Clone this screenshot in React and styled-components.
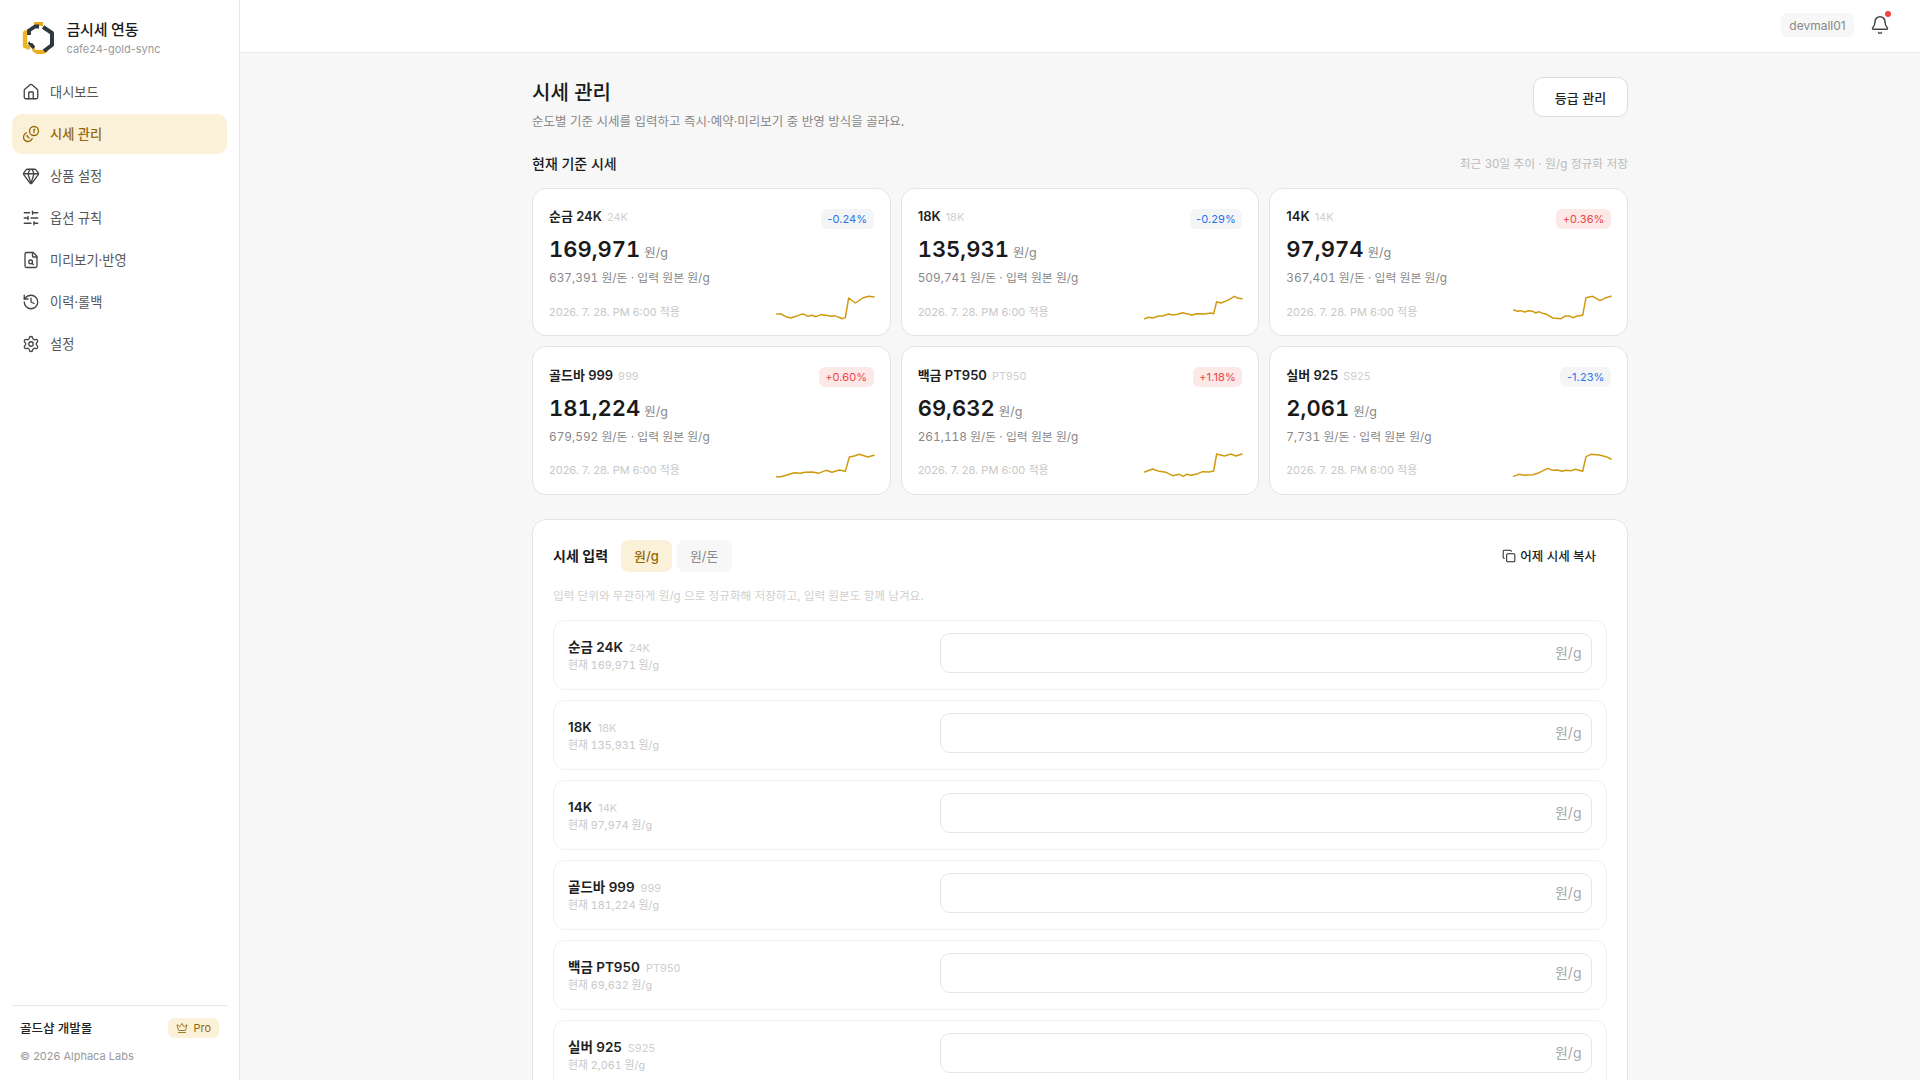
import React from "react";
import styled, { createGlobalStyle } from "styled-components";
import { House, Coins, Gem, SlidersHorizontal, FileSearch, History, Settings, Copy, Crown, Bell } from "lucide-react";

const Global = createGlobalStyle`
  html, body { margin: 0; height: 100%; overflow: hidden; }
  body { background: #f7f7f7; color: #1a1a1a; font-family: Inter, "Noto Sans CJK KR", sans-serif; }
  #root { height: 100%; }
  * { box-sizing: border-box; }
`;

const Shell = styled.div`display: flex; height: 100vh; overflow: hidden;`;
const Sidebar = styled.aside`
  width: 240px; flex: none; display: flex; flex-direction: column; background: #fff;
  border-right: 1px solid #e8e8e8; padding: 0 12px;
`;
const Brand = styled.div`display: flex; align-items: center; gap: 10.5px; height: 72px; padding: 4px 0 0 10px;`;
const BrandText = styled.div`display: flex; flex-direction: column; gap: 2px;`;
const BrandName = styled.div`font-size: 15px; font-weight: 500; line-height: 20px; letter-spacing: -0.2px;`;
const BrandSub = styled.div`font-size: 11px; color: #9a9a9a; line-height: 14px;`;
const Nav = styled.nav`display: flex; flex-direction: column; gap: 2px; flex: 1;`;
const NavItem = styled.div`
  display: flex; align-items: center; gap: 10px; height: 40px; padding: 0 10px; border-radius: 10px;
  font-size: 13.2px; font-weight: ${p => (p.$active ? 500 : 400)};
  color: ${p => (p.$active ? "#94690a" : "#555")};
  background: ${p => (p.$active ? "#fbf1d8" : "transparent")};
  svg { color: ${p => (p.$active ? "#94690a" : "#444")}; flex: none; margin-bottom: 1px; transform: ${p => (p.$active ? "scaleX(-1)" : "none")}; }
`;
const NavLabel = styled.span`padding-bottom: 2px;`;
const SideFoot = styled.div`border-top: 1px solid #e8e8e8; padding: 12px 8px 0; height: 75px;`;
const FootRow = styled.div`display: flex; align-items: center; justify-content: space-between; height: 20px;`;
const FootName = styled.div`font-size: 12.5px; font-weight: 500; color: #222; padding-bottom: 2px;`;
const ProBadge = styled.div`
  display: flex; align-items: center; gap: 5px; height: 20px; padding: 0 8px; border-radius: 6px;
  background: #fbf1d8; color: #94690a; font-size: 11px;
`;
const Copyright = styled.div`font-size: 11px; color: #999; margin-top: 11px; line-height: 14px;`;

const Body = styled.div`flex: 1; display: flex; flex-direction: column; min-width: 0;`;
const TopBar = styled.header`
  height: 53px; flex: none; background: #fff; border-bottom: 1px solid #e8e8e8;
  display: flex; align-items: center; justify-content: flex-end; padding: 0 30px 2px 0; gap: 16px;
`;
const UserChip = styled.div`
  height: 24px; width: 73px; border-radius: 6px; background: #f7f7f7; color: #888; font-size: 12px;
  display: flex; align-items: center; justify-content: center;
`;
const BellWrap = styled.div`position: relative; width: 20px; height: 20px; color: #444;`;
const BellDot = styled.span`
  position: absolute; top: -4px; right: -1px; width: 6px; height: 6px; border-radius: 50%; background: #f04444;
`;
const Main = styled.main`flex: 1; overflow: hidden; display: flex; justify-content: center; padding-top: 26px;`;
const Column = styled.div`width: 1096px; flex: none;`;
const PageHead = styled.div`display: flex; justify-content: space-between; align-items: flex-start;`;
const Title = styled.h1`font-size: 20px; font-weight: 500; margin: 0; line-height: 28px;`;
const Desc = styled.p`font-size: 12.5px; color: #888; margin: 6px 0 0; line-height: 18px;`;
const GhostButton = styled.button`
  width: 95px; height: 40px; border: 1px solid #ddd; border-radius: 10px; background: #fff;
  font: 500 13px Inter, "Noto Sans CJK KR", sans-serif; color: #222; margin-top: -2px;
`;
const SectionHead = styled.div`display: flex; justify-content: space-between; align-items: center; margin-top: 21.5px; height: 20px;`;
const SectionTitle = styled.h2`font-size: 14px; font-weight: 500; margin: 0;`;
const SectionNote = styled.div`font-size: 11.75px; color: #bbb;`;
const CardGrid = styled.div`display: grid; grid-template-columns: repeat(3, 1fr); gap: 10px; margin-top: 15px;`;
const Card = styled.div`
  height: 148.5px; background: #fff; border: 1px solid #e3e3e3; border-radius: 14px; padding: 20px 16px 14px;
  display: flex; flex-direction: column;
`;
const CardTop = styled.div`display: flex; justify-content: space-between; align-items: flex-start;`;
const NameLine = styled.div`display: flex; align-items: baseline; gap: 5px; height: 24px; line-height: 23px; margin-top: -3.5px;`;
const MetalName = styled.span`font-size: ${p => (p.$big ? "13.5px" : "13px")}; font-weight: 600; color: #1f1f1f;`;
const MetalCode = styled.span`font-size: 11px; color: #cfcfcf;`;
const Delta = styled.span`
  height: 20px; padding: 0 6.5px; border-radius: 6px; font-size: 11px; line-height: 20px; letter-spacing: 0.1px;
  color: ${p => (p.$up ? "#ef4444" : "#2a73e8")};
  background: ${p => (p.$up ? "#fde8e8" : "#f4f5f6")};
`;
const PriceLine = styled.div`display: flex; align-items: baseline; gap: 4px; margin-top: 6px; height: 28px; line-height: 28px;`;
const Price = styled.span`font-size: 22px; font-weight: 600; color: #1a1a1a; font-variant-numeric: tabular-nums;`;
const PriceUnit = styled.span`font-size: 12.5px; color: #888;`;
const SubLine = styled.div`font-size: 11.85px; color: #888; line-height: 16px; margin-top: 7px; font-variant-numeric: tabular-nums;`;
const CardFoot = styled.div`display: flex; justify-content: space-between; align-items: flex-end; margin-top: auto;`;
const DateText = styled.div`font-size: 11px; color: #c8c8c8; line-height: 14px; padding-bottom: 2.5px;`;
const Spark = styled.svg`width: 100px; height: 28px; overflow: visible; flex: none;`;

const FormCard = styled.section`
  margin-top: 24px; background: #fff; border: 1px solid #e3e3e3; border-radius: 14px 14px 0 0; padding: 20px 20px 40px;
`;
const FormHead = styled.div`display: flex; align-items: center; height: 32px;`;
const FormTitle = styled.div`font-size: 14px; font-weight: 600; margin-right: 13px; padding-bottom: 2px;`;
const UnitTab = styled.div`
  height: 32px; padding: 0 13px; border-radius: 8px; margin-right: 5px; display: flex; align-items: center; font-size: 13px;
  font-weight: ${p => (p.$active ? 500 : 400)};
  color: ${p => (p.$active ? "#94690a" : "#888")};
  background: ${p => (p.$active ? "#fbf1d8" : "#f7f7f7")};
`;
const CopyButton = styled.div`
  margin-left: auto; display: flex; align-items: center; gap: 4px; font-size: 12.5px; font-weight: 500; color: #222; padding-right: 11px;
`;
const Hint = styled.div`font-size: 11.6px; color: #cfcfcf; line-height: 16px; margin: 16px 0 16px;`;
const Rows = styled.div`display: flex; flex-direction: column; gap: 10px;`;
const Row = styled.div`
  height: 70px; border: 1px solid #f2f2f2; border-radius: 12px; padding: 0 14px;
  display: grid; grid-template-columns: 1fr 652px; align-items: center;
`;
const RowLeft = styled.div`display: flex; flex-direction: column;`;
const RowName = styled.div`display: flex; align-items: baseline; gap: 6px; line-height: 20px;`;
const RowSub = styled.div`font-size: 10.8px; color: #c8c8c8; line-height: 14px; margin-top: 1px; font-variant-numeric: tabular-nums;`;
const InputBox = styled.div`
  height: 40px; border: 1px solid #e6e6e6; border-radius: 10px; display: flex; align-items: center; justify-content: flex-end;
  padding: 0 9.5px 2px; font-size: 14px; color: #a8a8a8; margin-bottom: 3.5px;
`;

const Logo = () => (
  <svg width="34" height="34" viewBox="0 0 34 34" fill="none" style={{ flex: "none" }}>
    <path d="M7 10 L3 12 V25 L8 27" stroke="#eeb423" strokeWidth="4.4" strokeLinejoin="round" />
    <path d="M12 3 H21" stroke="#e6aa1f" strokeWidth="4" />
    <path d="M11 28 L15 31 H21 L25 29" stroke="#e8ad20" strokeWidth="4" strokeLinejoin="round" />
    <path d="M7 14 V9.5 L13 5.5 H17" stroke="#2f3a40" strokeWidth="3.8" strokeLinejoin="round" />
    <path d="M21 6 L30 12 V24 L22 30" stroke="#2f3a40" strokeWidth="4" strokeLinejoin="round" />
    <path d="M7 21 L12 27" stroke="#2f3a40" strokeWidth="3.6" />
    <path d="M13 8 H21 V14 H28 V22 H21 V29 H13 V22 H8 V14 H13 Z" fill="#fff" />
  </svg>
);

const navItems = [
  [House, "대시보드"], [Coins, "시세 관리", true], [Gem, "상품 설정"], [SlidersHorizontal, "옵션 규칙"],
  [FileSearch, "미리보기·반영"], [History, "이력·롤백"], [Settings, "설정"],
];

const metals = [
  { n: "순금 24K", c: "24K", p: "169,971", d: "637,391", k: "-0.24%", o: [764, 700],
    s: "772,763 785,763 800,771 815,775 830,770 845,764 855,764 866,770 878,767 890,771 905,765 920,767 935,770 945,768 958,773 970,777 978,774 988,715 1008,730 1030,715 1048,710 1064,712" },
  { n: "18K", c: "18K", p: "135,931", d: "509,741", k: "-0.29%", o: [758, 370],
    s: "766,447 778,443 790,445 808,439 820,439 838,433 850,436 865,434 880,429 895,433 908,436 922,432 945,433 965,430 973,432 982,396 995,400 1015,392 1035,380 1045,385 1058,387" },
  { n: "14K", c: "14K", p: "97,974", d: "367,401", k: "+0.36%", up: true, o: [755, 370],
    s: "763,421 775,425 785,423 795,427 808,423 820,425 830,430 838,426 850,431 862,434 880,445 905,447 918,439 930,439 940,444 952,440 970,437 980,384 1000,380 1022,393 1040,384 1055,380" },
  { n: "골드바 999", c: "999", p: "181,224", d: "679,592", k: "+0.60%", up: true, o: [764, 337],
    s: "772,411 785,411 805,405 825,399 845,401 855,398 880,397 897,401 920,392 938,398 960,391 978,395 990,352 1005,349 1020,344 1045,352 1064,347" },
  { n: "백금 PT950", c: "PT950", p: "69,632", d: "261,118", k: "+1.18%", up: true, o: [758, 848],
    s: "766,908 790,899 810,906 830,909 850,919 870,915 882,921 892,915 905,918 920,915 940,907 960,908 973,905 982,854 1005,860 1025,854 1040,860 1058,854" },
  { n: "실버 925", c: "S925", p: "2,061", d: "7,731", k: "-1.23%", o: [755, 848],
    s: "763,921 778,915 795,918 820,916 835,912 865,897 880,903 895,902 908,906 920,903 935,904 948,900 970,906 980,862 995,855 1020,857 1040,862 1055,869" },
];

export default function App() {
  return (
    <Shell>
      <Global />
      <Sidebar>
        <Brand>
          <Logo />
          <BrandText>
            <BrandName>금시세 연동</BrandName>
            <BrandSub>cafe24-gold-sync</BrandSub>
          </BrandText>
        </Brand>
        <Nav>
          {navItems.map(([Icon, label, active]) => (
            <NavItem key={label} $active={active}>
              <Icon size={18} strokeWidth={1.75} />
              <NavLabel>{label}</NavLabel>
            </NavItem>
          ))}
        </Nav>
        <SideFoot>
          <FootRow>
            <FootName>골드샵 개발몰</FootName>
            <ProBadge><Crown size={12} strokeWidth={1.75} />Pro</ProBadge>
          </FootRow>
          <Copyright>© 2026 Alphaca Labs</Copyright>
        </SideFoot>
      </Sidebar>
      <Body>
        <TopBar>
          <UserChip>devmall01</UserChip>
          <BellWrap><Bell size={20} strokeWidth={1.75} /><BellDot /></BellWrap>
        </TopBar>
        <Main>
          <Column>
            <PageHead>
              <div>
                <Title>시세 관리</Title>
                <Desc>순도별 기준 시세를 입력하고 즉시·예약·미리보기 중 반영 방식을 골라요.</Desc>
              </div>
              <GhostButton>등급 관리</GhostButton>
            </PageHead>
            <SectionHead>
              <SectionTitle>현재 기준 시세</SectionTitle>
              <SectionNote>최근 30일 추이 · 원/g 정규화 저장</SectionNote>
            </SectionHead>
            <CardGrid>
              {metals.map(m => (
                <Card key={m.n}>
                  <CardTop>
                    <NameLine><MetalName>{m.n}</MetalName><MetalCode>{m.c}</MetalCode></NameLine>
                    <Delta $up={m.up}>{m.k}</Delta>
                  </CardTop>
                  <PriceLine><Price>{m.p}</Price><PriceUnit>원/g</PriceUnit></PriceLine>
                  <SubLine>{m.d} 원/돈 · 입력 원본 원/g</SubLine>
                  <CardFoot>
                    <DateText>2026. 7. 28. PM 6:00 적용</DateText>
                    <Spark viewBox={`${m.o[0]} ${m.o[1]} 300 84`}>
                      <polyline points={m.s} fill="none" stroke="#d09a10" strokeWidth="4.5" strokeLinejoin="round" strokeLinecap="round" />
                    </Spark>
                  </CardFoot>
                </Card>
              ))}
            </CardGrid>
            <FormCard>
              <FormHead>
                <FormTitle>시세 입력</FormTitle>
                <UnitTab $active>원/g</UnitTab>
                <UnitTab>원/돈</UnitTab>
                <CopyButton><Copy size={14} strokeWidth={1.75} />어제 시세 복사</CopyButton>
              </FormHead>
              <Hint>입력 단위와 무관하게 원/g 으로 정규화해 저장하고, 입력 원본도 함께 남겨요.</Hint>
              <Rows>
                {metals.map(m => (
                  <Row key={m.n}>
                    <RowLeft>
                      <RowName><MetalName $big>{m.n}</MetalName><MetalCode>{m.c}</MetalCode></RowName>
                      <RowSub>현재 {m.p} 원/g</RowSub>
                    </RowLeft>
                    <InputBox>원/g</InputBox>
                  </Row>
                ))}
              </Rows>
            </FormCard>
          </Column>
        </Main>
      </Body>
    </Shell>
  );
}
